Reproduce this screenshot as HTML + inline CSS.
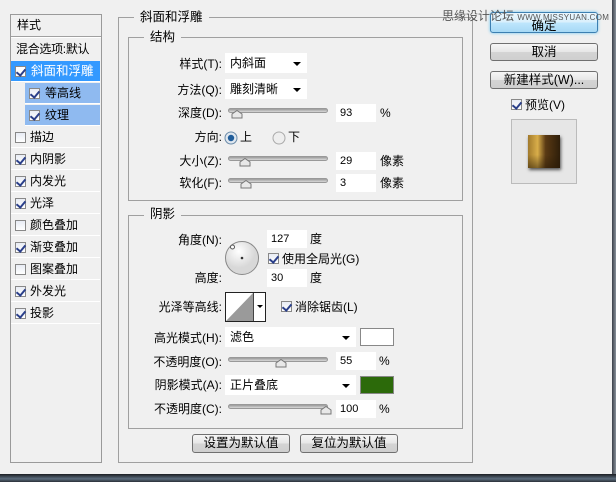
<!DOCTYPE html>
<html><head><meta charset="utf-8"><style>
*{margin:0;padding:0;box-sizing:border-box}
body{width:616px;height:482px;background:#f0f0f0;position:relative;overflow:hidden;font-family:"Liberation Sans","Noto Sans CJK SC","WenQuanYi Zen Hei",sans-serif;font-size:12px;color:#000}
.a{position:absolute}
.t{position:absolute;white-space:nowrap;line-height:14px}
.r{text-align:right}
.inp{position:absolute;background:#fff;height:18px;width:40px;padding:2px 4px;font-size:11px;line-height:14px}
.dd{position:absolute;background:#fff;height:20px;padding:3px 5px;line-height:14px}
.dd:after{content:"";position:absolute;right:6px;top:9px;border-left:4px solid transparent;border-right:4px solid transparent;border-top:4px solid #000}
.track{position:absolute;height:5px;background:linear-gradient(#9a9a9a,#d8d8d8);border-radius:3px;border:1px solid #999;width:100px}
.cb{position:absolute;width:11px;height:11px;border:1px solid #888;background:linear-gradient(#e8ecf4,#fff);}
.cb.on:after{content:"";position:absolute;left:2px;top:0px;width:4px;height:7px;border:solid #2a3f8a;border-width:0 2px 2px 0;transform:rotate(40deg)}
.gb{position:absolute;border:1px solid #a0a0a0}
.gl{position:absolute;background:#f0f0f0;padding:0 6px;line-height:14px;font-size:12.5px}
.btn{position:absolute;border:1px solid #707070;border-radius:3px;background:linear-gradient(#f6f6f6 0,#e6e6e6 50%,#d4d4d4 51%,#cfcfcf);text-align:center;line-height:16px;font-size:12.5px}
.li{position:absolute;left:11px;width:89px;height:21px;border-bottom:1px solid #fff;line-height:20px;padding-left:19px}
.li .cb{left:4px;top:5px}
</style></head><body>
<div class="a" style="left:612px;top:0;width:4px;height:482px;background:linear-gradient(90deg,#3a3f48,#8a929c)"></div>
<div class="a" style="left:0;top:474px;width:616px;height:8px;background:linear-gradient(#1a1d22,#5a6b7c 60%,#2a3038)"></div>

<div class="a" style="left:10px;top:14px;width:92px;height:449px;border:1px solid #9a9a9a;background:#f0f0f0"></div>
<div class="t" style="left:17px;top:18px">样式</div>
<div class="a" style="left:11px;top:36px;width:90px;height:2px;border-top:1px solid #a0a0a0;border-bottom:1px solid #fff"></div>
<div class="t" style="left:16px;top:42px;letter-spacing:-0.3px">混合选项:默认</div>
<div class="li" style="top:61px;background:#3399ff;color:#fff;padding-left:20px;font-size:12.5px"><span class="cb on" style="background:#fff"></span>斜面和浮雕</div>
<div class="li" style="top:83px;background:#8fbaf0;left:25px;width:75px;padding-left:20px"><span class="cb on"></span>等高线</div>
<div class="li" style="top:105px;background:#8fbaf0;left:25px;width:75px;padding-left:20px"><span class="cb on"></span>纹理</div>
<div class="a" style="left:11px;top:83px;width:14px;height:44px;background:#f0f0f0"></div>
<div class="li" style="top:127px"><span class="cb"></span>描边</div>
<div class="li" style="top:149px"><span class="cb on"></span>内阴影</div>
<div class="li" style="top:171px"><span class="cb on"></span>内发光</div>
<div class="li" style="top:193px"><span class="cb on"></span>光泽</div>
<div class="li" style="top:215px"><span class="cb"></span>颜色叠加</div>
<div class="li" style="top:237px"><span class="cb on"></span>渐变叠加</div>
<div class="li" style="top:259px"><span class="cb"></span>图案叠加</div>
<div class="li" style="top:281px"><span class="cb on"></span>外发光</div>
<div class="li" style="top:303px"><span class="cb on"></span>投影</div>

<div class="gb" style="left:118px;top:17px;width:355px;height:446px"></div>
<div class="gl" style="left:134px;top:10px">斜面和浮雕</div>
<div class="gb" style="left:128px;top:37px;width:335px;height:164px"></div>
<div class="gl" style="left:144px;top:30px">结构</div>

<div class="t r" style="left:150px;width:72px;top:57px">样式(T):</div>
<div class="dd" style="left:225px;top:53px;width:82px">内斜面</div>
<div class="t r" style="left:150px;width:72px;top:83px">方法(Q):</div>
<div class="dd" style="left:225px;top:79px;width:82px">雕刻清晰</div>
<div class="t r" style="left:150px;width:72px;top:106px">深度(D):</div>
<div class="track" style="left:228px;top:108px"></div>
<svg class="a" style="left:231px;top:110px" width="12" height="9"><path d="M1 8V4L6 0.5 11 4V8Z" fill="#e8e8e8" stroke="#777"/></svg>
<div class="inp" style="left:336px;top:104px">93</div><div class="t" style="left:380px;top:106px">%</div>
<div class="t r" style="left:150px;width:72px;top:130px">方向:</div>
<svg class="a" style="left:224px;top:131px" width="14" height="14"><circle cx="7" cy="7" r="6" fill="#dfe7ef" stroke="#6a8aa8"/><circle cx="7" cy="7" r="3.2" fill="#1e5c9a"/></svg>
<div class="t" style="left:240px;top:130px">上</div>
<svg class="a" style="left:272px;top:131px" width="14" height="14"><circle cx="7" cy="7" r="6" fill="#eee" stroke="#aaa"/></svg>
<div class="t" style="left:288px;top:130px">下</div>
<div class="t r" style="left:150px;width:72px;top:154px">大小(Z):</div>
<div class="track" style="left:228px;top:156px"></div>
<svg class="a" style="left:239px;top:158px" width="12" height="9"><path d="M1 8V4L6 0.5 11 4V8Z" fill="#e8e8e8" stroke="#777"/></svg>
<div class="inp" style="left:336px;top:152px">29</div><div class="t" style="left:380px;top:154px">像素</div>
<div class="t r" style="left:150px;width:72px;top:176px">软化(F):</div>
<div class="track" style="left:228px;top:178px"></div>
<svg class="a" style="left:240px;top:180px" width="12" height="9"><path d="M1 8V4L6 0.5 11 4V8Z" fill="#e8e8e8" stroke="#777"/></svg>
<div class="inp" style="left:336px;top:174px">3</div><div class="t" style="left:380px;top:176px">像素</div>

<div class="gb" style="left:128px;top:215px;width:335px;height:214px"></div>
<div class="gl" style="left:144px;top:207px">阴影</div>
<div class="t r" style="left:150px;width:72px;top:233px">角度(N):</div>
<svg class="a" style="left:224px;top:240px" width="36" height="36"><defs><radialGradient id="g" cx="0.4" cy="0.3"><stop offset="0" stop-color="#fff"/><stop offset="1" stop-color="#d8d8d8"/></radialGradient></defs><circle cx="18" cy="18" r="16.5" fill="url(#g)" stroke="#888"/><circle cx="18" cy="18" r="1.3" fill="#333"/><circle cx="8.5" cy="7" r="2" fill="#fff" stroke="#555"/></svg>
<div class="inp" style="left:267px;top:230px">127</div><div class="t" style="left:310px;top:232px">度</div>
<span class="cb on" style="left:268px;top:253px"></span><div class="t" style="left:282px;top:252px">使用全局光(G)</div>
<div class="t r" style="left:150px;width:72px;top:271px">高度:</div>
<div class="inp" style="left:267px;top:269px">30</div><div class="t" style="left:310px;top:271px">度</div>
<div class="t r" style="left:130px;width:92px;top:300px">光泽等高线:</div>
<div class="a" style="left:225px;top:292px;width:41px;height:30px;border:1px solid #222;background:#fff"></div>
<svg class="a" style="left:226px;top:293px" width="27" height="28"><path d="M0 28L27 0V28Z" fill="#9a9a9a"/></svg>
<div class="a" style="left:253px;top:293px;width:1px;height:28px;background:#444"></div>
<div class="a" style="left:257px;top:305px;border-left:3px solid transparent;border-right:3px solid transparent;border-top:3px solid #000"></div>
<span class="cb on" style="left:281px;top:301px"></span><div class="t" style="left:295px;top:300px">消除锯齿(L)</div>
<div class="t r" style="left:130px;width:92px;top:331px">高光模式(H):</div>
<div class="dd" style="left:225px;top:327px;width:131px">滤色</div>
<div class="a" style="left:360px;top:328px;width:34px;height:18px;border:1px solid #888;background:#fff"></div>
<div class="t r" style="left:130px;width:92px;top:355px">不透明度(O):</div>
<div class="track" style="left:228px;top:357px"></div>
<svg class="a" style="left:275px;top:359px" width="12" height="9"><path d="M1 8V4L6 0.5 11 4V8Z" fill="#e8e8e8" stroke="#777"/></svg>
<div class="inp" style="left:336px;top:352px">55</div><div class="t" style="left:379px;top:354px">%</div>
<div class="t r" style="left:130px;width:92px;top:378px">阴影模式(A):</div>
<div class="dd" style="left:225px;top:375px;width:131px">正片叠底</div>
<div class="a" style="left:360px;top:376px;width:34px;height:18px;border:1px solid #888;background:#2c6a0a"></div>
<div class="t r" style="left:130px;width:92px;top:402px">不透明度(C):</div>
<div class="track" style="left:228px;top:404px"></div>
<svg class="a" style="left:320px;top:406px" width="12" height="9"><path d="M1 8V4L6 0.5 11 4V8Z" fill="#e8e8e8" stroke="#777"/></svg>
<div class="inp" style="left:336px;top:400px">100</div><div class="t" style="left:379px;top:402px">%</div>
<div class="btn" style="left:192px;top:434px;width:98px;height:19px">设置为默认值</div>
<div class="btn" style="left:300px;top:434px;width:98px;height:19px">复位为默认值</div>

<div class="btn" style="left:490px;top:12px;width:108px;height:21px;border-color:#3c7fb1;box-shadow:0 0 3px #6cc6f0;background:linear-gradient(#eaf6fd,#d9f0fc 50%,#bee6fd 51%,#a7d9f5);line-height:26px">确定</div>
<div class="btn" style="left:490px;top:43px;width:108px;height:18px">取消</div>
<div class="btn" style="left:490px;top:71px;width:108px;height:18px">新建样式(W)...</div>
<span class="cb on" style="left:511px;top:99px"></span><div class="t" style="left:525px;top:98px">预览(V)</div>
<div class="a" style="left:511px;top:119px;width:66px;height:65px;border:1px solid #bbb;background:#e6e6e6"></div>
<div class="a" style="left:528px;top:135px;width:32px;height:33px;box-shadow:1px 2px 3px #555;background:linear-gradient(90deg,#a17a2c 0,#d9ae4a 30%,#5a3a14 55%,#2e1e0a)"></div>
<div class="a" style="left:528px;top:135px;width:32px;height:33px;background:linear-gradient(transparent 60%,rgba(40,25,5,.5))"></div>

<div class="t" style="left:442px;top:9px;color:#555;font-size:12px">思缘设计论坛 <span style="font-size:8px;letter-spacing:0.3px">WWW.MISSYUAN.COM</span></div>
</body></html>
